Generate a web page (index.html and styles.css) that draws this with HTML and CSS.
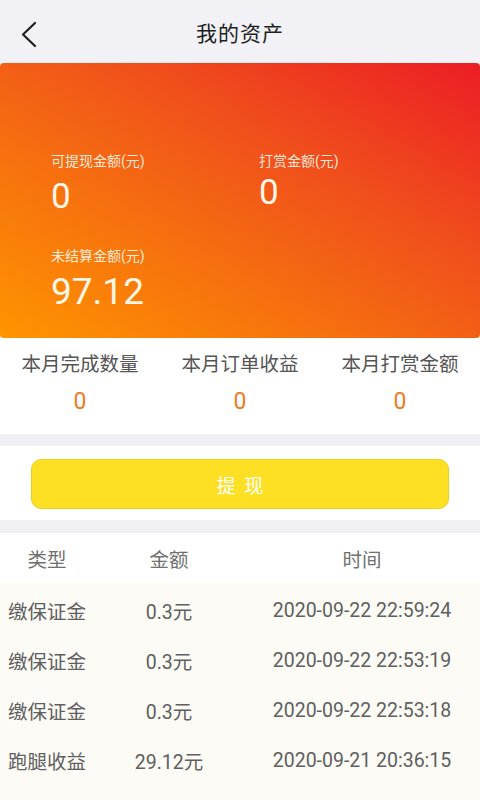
FILE: index.html
```html
<!DOCTYPE html>
<html lang="zh-CN">
<head>
<meta charset="utf-8">
<title>我的资产</title>
<link rel="stylesheet" href="styles.css">
</head>
<body>
<div class="page">
  <header class="topbar">
    <svg class="back" width="20" height="28" viewBox="0 0 20 28"><path d="M15 2 L3 13.5 L15 25" fill="none" stroke="#1e1e1e" stroke-width="2.2" stroke-linecap="round" stroke-linejoin="round"/></svg>
    <h1 class="title">我的资产</h1>
  </header>

  <section class="card">
    <div class="card-grid">
      <div class="cell">
        <div class="cell-label">可提现金额(元)</div>
        <div class="cell-value">0</div>
      </div>
      <div class="cell">
        <div class="cell-label">打赏金额(元)</div>
        <div class="cell-value up">0</div>
      </div>
      <div class="cell">
        <div class="cell-label">未结算金额(元)</div>
        <div class="cell-value big">97.12</div>
      </div>
    </div>
  </section>

  <section class="stats">
    <div class="stat"><div class="stat-label">本月完成数量</div><div class="stat-value">0</div></div>
    <div class="stat"><div class="stat-label">本月订单收益</div><div class="stat-value">0</div></div>
    <div class="stat"><div class="stat-label">本月打赏金额</div><div class="stat-value">0</div></div>
  </section>

  <section class="action">
    <button class="btn">提 现</button>
  </section>

  <section class="table">
    <div class="row head"><span>类型</span><span>金额</span><span>时间</span></div>
    <div class="row item"><span>缴保证金</span><span>0.3元</span><span>2020-09-22 22:59:24</span></div>
    <div class="row item"><span>缴保证金</span><span>0.3元</span><span>2020-09-22 22:53:19</span></div>
    <div class="row item"><span>缴保证金</span><span>0.3元</span><span>2020-09-22 22:53:18</span></div>
    <div class="row item"><span>跑腿收益</span><span>29.12元</span><span>2020-09-21 20:36:15</span></div>
  </section>
</div>
</body>
</html>
```

FILE: styles.css
```css
* { box-sizing: border-box; }
html, body { margin: 0; padding: 0; }
body {
  background: #fcfbf6;
  font-family: Roboto, "Noto Sans CJK SC", sans-serif;
  width: 480px;
  height: 800px;
  overflow: hidden;
}
.page {
  width: 480px;
  background: #f0f0f4;
}

.topbar {
  height: 63px;
  background: #f2f2f6;
  display: flex;
  align-items: center;
  justify-content: center;
  position: relative;
}
.back { position: absolute; left: 20px; top: 21px; }
.title {
  margin: 0;
  font-size: 21px;
  font-weight: 400;
  color: #1e1e1e;
  letter-spacing: 1px;
}

.card {
  height: 275px;
  border-radius: 4px;
  background: linear-gradient(to top right, #ff9400 0%, #f6700f 35%, #f04e1c 65%, #ec1d25 100%);
  padding: 88px 0 0 51px;
  color: #fff6e6;
}
.card-grid {
  display: grid;
  grid-template-columns: 208px 1fr;
  row-gap: 29px;
}
.cell-label {
  font-size: 14px;
  line-height: 20px;
  color: rgba(255, 246, 230, 0.92);
}
.cell-value {
  font-size: 35px;
  line-height: 40px;
  margin-top: 6px;
}
.cell-value.up { margin-top: 2px; }
.cell-value.big { font-size: 37px; margin-top: 6px; }

.stats {
  height: 96px;
  background: #fff;
  display: grid;
  grid-template-columns: repeat(3, 1fr);
  padding-top: 14px;
}
.stat { text-align: center; }
.stat-label {
  font-size: 19.5px;
  line-height: 26px;
  color: #555;
}
.stat-value {
  font-size: 23px;
  line-height: 28px;
  margin-top: 10px;
  color: #ef7a28;
}

.action {
  margin-top: 12px;
  height: 74px;
  background: #fff;
  padding: 13px 31px 0;
}
.btn {
  width: 100%;
  height: 50px;
  border: 1px solid #f0cf1c;
  border-radius: 10px;
  background: #fddf24;
  color: #fff;
  font-family: inherit;
  font-size: 19px;
  letter-spacing: 2px;
  padding: 0 0 0 2px;
}

.table {
  margin-top: 13px;
}
.row {
  display: grid;
  grid-template-columns: 94px 150px 1fr;
  align-items: center;
  height: 50px;
  font-size: 19.5px;
  color: #666;
  text-align: center;
}
.row.head { background: #fff; color: #707070; }
.row.item { background: #fcfbf6; color: #5f5f5f; }
.row.head + .row.item { padding-top: 2px; height: 52px; }
```
